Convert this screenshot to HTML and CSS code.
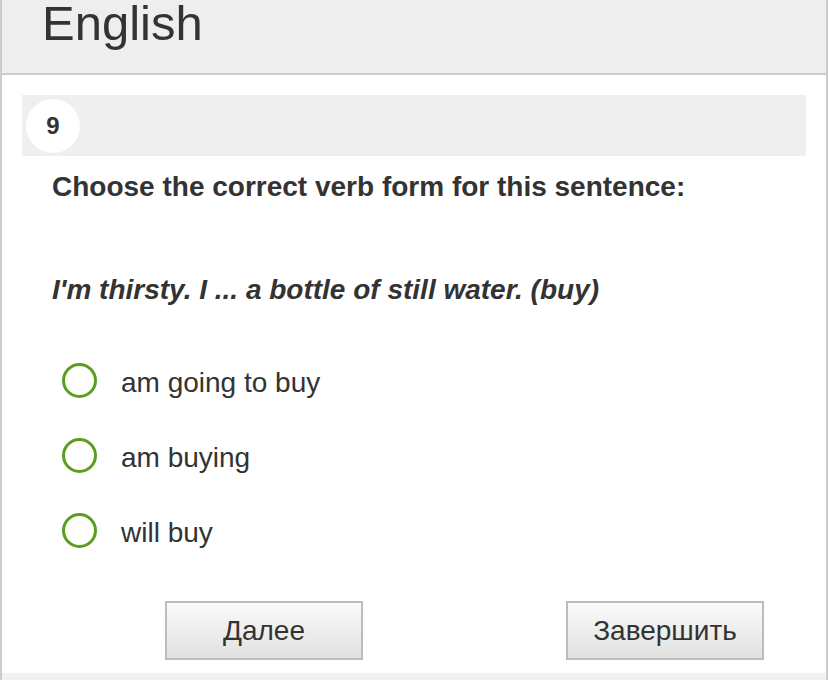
FILE: index.html
```html
<!DOCTYPE html>
<html lang="en">
<head>
  <meta charset="UTF-8">
  <meta name="viewport" content="width=device-width, initial-scale=1.0">
  <title>English test</title>
  <link rel="stylesheet" href="styles.css">
</head>
<body>
  <div class="page">
    <header class="header">
      <h1>English</h1>
    </header>

    <main class="content">
      <div class="qnum">
        <span class="qnum-circle">9</span>
      </div>

      <p class="question">Choose the correct verb form for this sentence:</p>
      <p class="sentence">I'm thirsty. I ... a bottle of still water. (buy)</p>

      <ul class="options">
        <li class="option"><span class="radio"></span><span class="option-text">am going to buy</span></li>
        <li class="option"><span class="radio"></span><span class="option-text">am buying</span></li>
        <li class="option"><span class="radio"></span><span class="option-text">will buy</span></li>
      </ul>

      <!-- Navigation buttons -->
      <div class="actions">
        <button class="btn">Далее</button>
        <button class="btn">Завершить</button>
      </div>
    </main>

    <div class="footer"></div>
  </div>
</body>
</html>
```

FILE: styles.css
```css
/* Base layout */
body {
  margin: 0;
  font-family: "Liberation Sans", Arial, sans-serif;
  color: #333;
  background: #fff;
}

.page {
  border-left: 2px solid #ccc;
  border-right: 2px solid #ccc;
}

/* Header */
.header {
  height: 73px;
  background-color: #eee;
  border-bottom: 2px solid #ccc;
  padding-left: 40px;
}

.header h1 {
  margin: 0;
  font-size: 49px;
  font-weight: normal;
  line-height: 47px;
  color: #333;
}

.content {
  padding: 20px 20px 13px;
}

/* Question number bar */
.qnum {
  height: 61px;
  box-sizing: border-box;
  padding: 4px;
  background-color: #efefef;
}

.qnum-circle {
  display: flex;
  align-items: center;
  justify-content: center;
  width: 54px;
  height: 54px;
  border-radius: 50%;
  background-color: #fff;
  font-size: 24px;
  font-weight: bold;
}

.question {
  margin: 15px 0 0;
  padding-left: 30px;
  font-size: 28px;
  font-weight: bold;
  line-height: 32px;
}

.sentence {
  margin: 71px 0 0;
  padding-left: 30px;
  font-size: 28px;
  font-weight: bold;
  font-style: italic;
  line-height: 32px;
}

/* Answer options */
.options {
  list-style: none;
  margin: 57px 0 0;
  padding: 0 0 0 40px;
  display: flex;
  flex-direction: column;
  gap: 38px;
}

.option {
  display: flex;
  align-items: flex-start;
}

.radio {
  width: 35px;
  height: 35px;
  box-sizing: border-box;
  border: 3.5px solid #5b9e1f;
  border-radius: 50%;
  margin-right: 24px;
}

.option-text {
  margin-top: 3px;
  font-size: 28px;
  line-height: 34px;
}

/* Buttons */
.actions {
  display: flex;
  gap: 203px;
  margin-top: 51px;
  padding-left: 143px;
}

.btn {
  width: 198px;
  height: 59px;
  box-sizing: border-box;
  border: 2px solid #bcbcbc;
  background: linear-gradient(#fbfbfb, #e1e1e1);
  font-family: "Liberation Sans", Arial, sans-serif;
  font-size: 28px;
  color: #333;
  cursor: pointer;
}

.footer {
  height: 20px;
  background-color: #f1f1f1;
}
```
